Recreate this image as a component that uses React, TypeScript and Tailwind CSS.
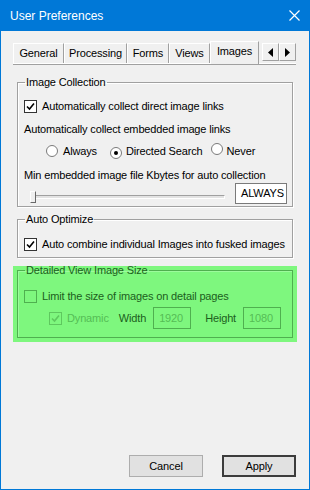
import React from 'react';

function Check({ checked, disabled }: { checked?: boolean; disabled?: boolean }) {
  return (
    <span
      className={
        'inline-flex items-center justify-center w-[13px] h-[13px] border shrink-0 ' +
        (disabled ? 'border-[#5ec85e] bg-[#7ef77e]' : checked ? 'border-[#333333] bg-white' : 'border-[#4fb04f] bg-[#7ef77e]')
      }
    >
      {checked && (
        <svg width="9" height="9" viewBox="0 0 9 9">
          <path
            d="M1 4.5 L3.5 7 L8 1.5"
            fill="none"
            stroke={disabled ? '#5ec85e' : '#000'}
            strokeWidth="1.6"
          />
        </svg>
      )}
    </span>
  );
}

function Radio({ checked }: { checked?: boolean }) {
  return (
    <span className="inline-flex items-center justify-center w-[12px] h-[12px] rounded-full border border-[#7a7a7a] bg-white shrink-0">
      {checked && <span className="w-[4px] h-[4px] rounded-full bg-black" />}
    </span>
  );
}

function Tab({ label, selected, w }: { label: string; selected?: boolean; w: string }) {
  if (selected) {
    return (
      <div className={w + ' h-[23px] -mb-[1px] pb-[3px] flex items-center justify-center bg-[#f0f0f0] border-t border-l border-white border-r border-r-[#a0a0a0] relative z-10'}>
        {label}
      </div>
    );
  }
  return (
    <div className={w + ' h-[20px] flex items-center justify-center bg-[#f0f0f0] border-t border-l border-white border-r border-r-[#a0a0a0]'}>
      {label}
    </div>
  );
}

function ArrowBtn({ dir }: { dir: 'l' | 'r' }) {
  return (
    <div className="w-[17px] h-[18px] flex items-center justify-center bg-[#f0f0f0] border border-t-white border-l-white border-r-[#a0a0a0] border-b-[#a0a0a0]">
      <svg width="5" height="9" viewBox="0 0 5 9">
        {dir === 'l' ? <path d="M5 0 L0 4.5 L5 9 Z" fill="#000" /> : <path d="M0 0 L5 4.5 L0 9 Z" fill="#000" />}
      </svg>
    </div>
  );
}

export default function App() {
  return (
    <div
      className="w-[310px] h-[490px] flex flex-col bg-[#f0f0f0] border-x border-b border-[#0078d7] text-[11px] text-black tracking-[-0.15px]"
      style={{ fontFamily: '"Liberation Sans", Arial, sans-serif' }}
    >
      <div className="h-[31px] bg-[#0078d7] flex items-center justify-between pl-[9px] pr-[9px] text-white shrink-0 tracking-normal">
        <span className="text-[12px]">User Preferences</span>
        <svg width="11" height="11" viewBox="0 0 11 11">
          <path d="M0.5 0.5 L10.5 10.5 M10.5 0.5 L0.5 10.5" stroke="#fff" strokeWidth="1.2" />
        </svg>
      </div>

      <div className="flex-1 flex flex-col px-[12px] pt-[11px] pb-[12px]">
        <div className="flex items-end border-b border-white shadow-[0_1px_0_#a0a0a0] h-[22px] mr-[1px]">
          <Tab w="w-[51px]" label="General" />
          <Tab w="w-[63px]" label="Processing" />
          <Tab w="w-[42px]" label="Forms" />
          <Tab w="w-[41px]" label="Views" />
          <Tab w="w-[49px]" selected label="Images" />
          <div className="flex-1" />
        </div>
        <div className="flex justify-end -mt-[22px] h-[22px] items-start pt-[1px] pr-[1px] relative z-20">
          <ArrowBtn dir="l" />
          <ArrowBtn dir="r" />
        </div>

        <div className="px-[4px] pt-[12px] flex flex-col">
          <fieldset className="border border-[#a0a0a0] shadow-[inset_1px_1px_0_#fff,1px_1px_0_#fff] pl-[6px] pr-[5px] pb-[1px]">
            <legend className="px-[1px] ml-[1px] leading-[13px]">Image Collection</legend>
            <div className="flex items-center gap-[5px] mt-[9px] h-[16px]">
              <Check checked />
              <span>Automatically collect direct image links</span>
            </div>
            <div className="mt-[7px] h-[16px] flex items-center">Automatically collect embedded image links</div>
            <div className="flex items-center h-[16px] mt-[6px] pl-[22px]">
              <Radio />
              <span className="ml-[5px]">Always</span>
              <span className="ml-[13px]">
                <Radio checked />
              </span>
              <span className="ml-[4px]">Directed Search</span>
              <span className="ml-[8px]">
                <Radio />
              </span>
              <span className="ml-[4px]">Never</span>
            </div>
            <div className="mt-[8px] h-[16px] flex items-center">Min embedded image file Kbytes for auto collection</div>
            <div className="flex items-start">
              <div className="flex-1 relative h-[16px] mt-[6px] flex items-center ml-[6px] mr-[10px]">
                <div className="flex-1 h-[4px] border border-t-[#a0a0a0] border-l-[#a0a0a0] border-b-white border-r-white bg-[#e3e3e3]" />
                <div className="absolute left-0 top-[2px] w-[6px] h-[12px] bg-[#f0f0f0] border border-t-white border-l-white border-r-[#696969] border-b-[#696969]" />
              </div>
              <div className="w-[52px] h-[21px] bg-white border border-[#7a7a7a] flex items-center pl-[5px]">ALWAYS</div>
            </div>
          </fieldset>

          <fieldset className="mt-[6px] border border-[#a0a0a0] shadow-[inset_1px_1px_0_#fff,1px_1px_0_#fff] pl-[6px] pr-[5px] pb-[5px]">
            <legend className="px-[1px] ml-[1px] leading-[13px]">Auto Optimize</legend>
            <div className="flex items-center gap-[5px] mt-[10px] h-[16px] whitespace-nowrap overflow-hidden">
              <Check checked />
              <span>Auto combine individual Images into fusked images</span>
            </div>
          </fieldset>

          <div className="mt-[8px] bg-[#7ef77e] -mx-[4px] px-[4px] pb-[4px]">
            <fieldset className="border border-[#4fb04f] shadow-[inset_1px_1px_0_#9cfb9c] pl-[6px] pr-[5px] pb-[8px] text-[#1c5e1c]">
              <legend className="px-[1px] ml-[1px] leading-[9px]">Detailed View Image Size</legend>
              <div className="flex items-center gap-[5px] mt-[13px] h-[16px]">
                <Check />
                <span>Limit the size of images on detail pages</span>
              </div>
              <div className="flex items-center mt-[3px] h-[22px] pl-[25px]">
                <Check checked disabled />
                <span className="ml-[5px] text-[#55bd55]">Dynamic</span>
                <span className="ml-[10px]">Width</span>
                <div className="ml-[7px] w-[38px] h-[22px] border border-[#4fb04f] flex items-center pl-[5px] text-[#55bd55]">
                  1920
                </div>
                <span className="ml-[14px]">Height</span>
                <div className="ml-[7px] w-[38px] h-[22px] border border-[#4fb04f] flex items-center pl-[5px] text-[#55bd55]">
                  1080
                </div>
              </div>
            </fieldset>
          </div>
        </div>

        <div className="flex-1" />

        <div className="flex justify-end gap-[19px] pr-[1px]">
          <button className="w-[74px] h-[22px] bg-[#e1e1e1] border border-[#adadad]">Cancel</button>
          <button className="w-[74px] h-[22px] bg-[#e1e1e1] border-2 border-[#3c3c3c]">Apply</button>
        </div>
      </div>
    </div>
  );
}
